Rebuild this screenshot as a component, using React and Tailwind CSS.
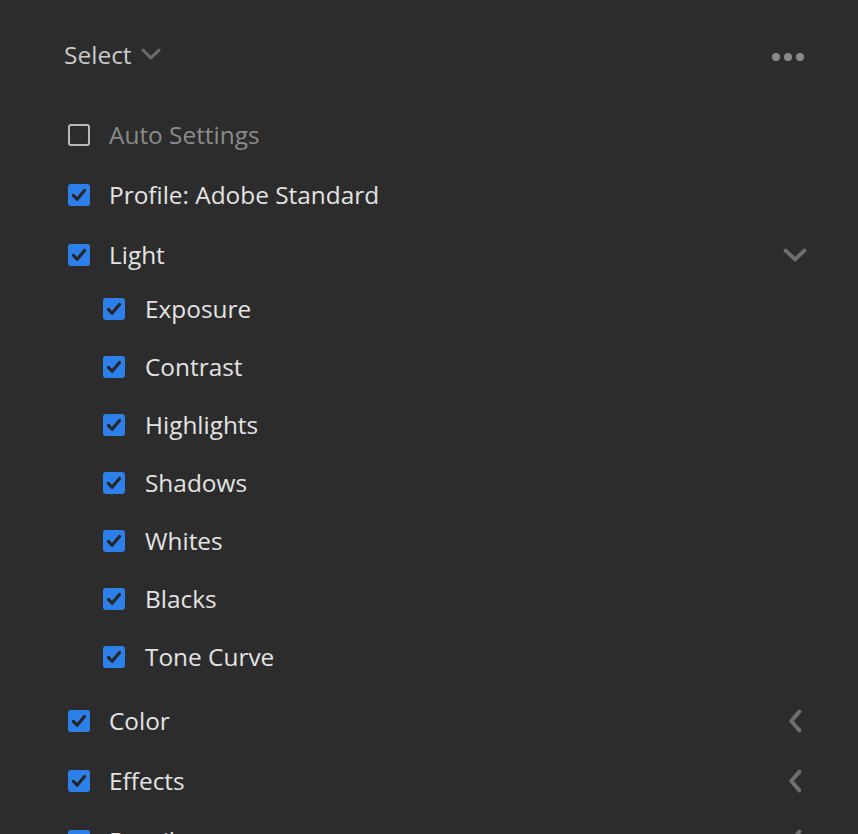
import React from 'react';

const Check = ({ checked }) =>
  checked ? (
    <span className="flex h-[22px] w-[22px] shrink-0 items-center justify-center rounded-[3px] bg-[#2d7fea]">
      <svg width="18" height="18" viewBox="0 0 16 16" fill="none">
        <path d="M3 8.3 L6.3 11.8 L12.9 4" stroke="#262626" strokeWidth="2.8" strokeLinecap="round" strokeLinejoin="round" />
      </svg>
    </span>
  ) : (
    <span className="h-[22px] w-[22px] shrink-0 rounded-[3px] border-2 border-[#b9b9b9]" />
  );

const ChevronDown = ({ size = 30, color = '#6e6e6e', stroke = 3.2 }) => (
  <svg width={size} height={size} viewBox="0 0 24 24" fill="none">
    <path d="M4.5 8.5 L12 15.5 L19.5 8.5" stroke={color} strokeWidth={stroke} strokeLinecap="round" strokeLinejoin="round" />
  </svg>
);

const ChevronLeft = () => (
  <svg width="30" height="30" viewBox="0 0 24 24" fill="none">
    <path d="M15.5 4.5 L9 12 L15.5 19.5" stroke="#6e6e6e" strokeWidth="3.2" strokeLinecap="round" strokeLinejoin="round" />
  </svg>
);

const Row = ({ label, checked = true, muted, right }) => (
  <div className="flex h-[60px] items-center pl-[68px] pr-[48px]">
    <Check checked={checked} />
    <span className={`ml-[19px] text-[24.4px] ${muted ? 'text-[#8b8b8b]' : 'text-[#e3e3e3]'}`}>{label}</span>
    <span className="ml-auto flex items-center">{right}</span>
  </div>
);

const SubRow = ({ label }) => (
  <div className="flex h-[58px] items-center pl-[103px]">
    <Check checked />
    <span className="ml-[20px] text-[24.4px] text-[#e3e3e3]">{label}</span>
  </div>
);

const lightItems = ['Exposure', 'Contrast', 'Highlights', 'Shadows', 'Whites', 'Blacks', 'Tone Curve'];

export default function App() {
  return (
    <div className="h-[834px] w-[858px] overflow-hidden bg-[#2c2c2c] font-['Open_Sans',sans-serif] leading-none">
      <div className="mt-[40px] flex h-[30px] items-center pl-[64px] pr-[54px]">
        <span className="text-[24.5px] text-[#c9c9c9]">Select</span>
        <span className="ml-[6px] mt-[-3px]">
          <ChevronDown size={26} color="#6a6a6a" stroke={2.8} />
        </span>
        <span className="ml-auto mt-[4px] flex gap-[4px]">
          <span className="h-[8px] w-[8px] rounded-full bg-[#8a8a8a]" />
          <span className="h-[8px] w-[8px] rounded-full bg-[#8a8a8a]" />
          <span className="h-[8px] w-[8px] rounded-full bg-[#8a8a8a]" />
        </span>
      </div>
      <div className="mt-[35px]">
        <Row label="Auto Settings" checked={false} muted />
        <Row label="Profile: Adobe Standard" />
        <Row label="Light" right={<ChevronDown />} />
        <div className="-mt-[5px] mb-[5px]">
          {lightItems.map((l) => (
            <SubRow key={l} label={l} />
          ))}
        </div>
        <Row label="Color" right={<ChevronLeft />} />
        <Row label="Effects" right={<ChevronLeft />} />
        <Row label="Detail" right={<ChevronLeft />} />
      </div>
    </div>
  );
}
